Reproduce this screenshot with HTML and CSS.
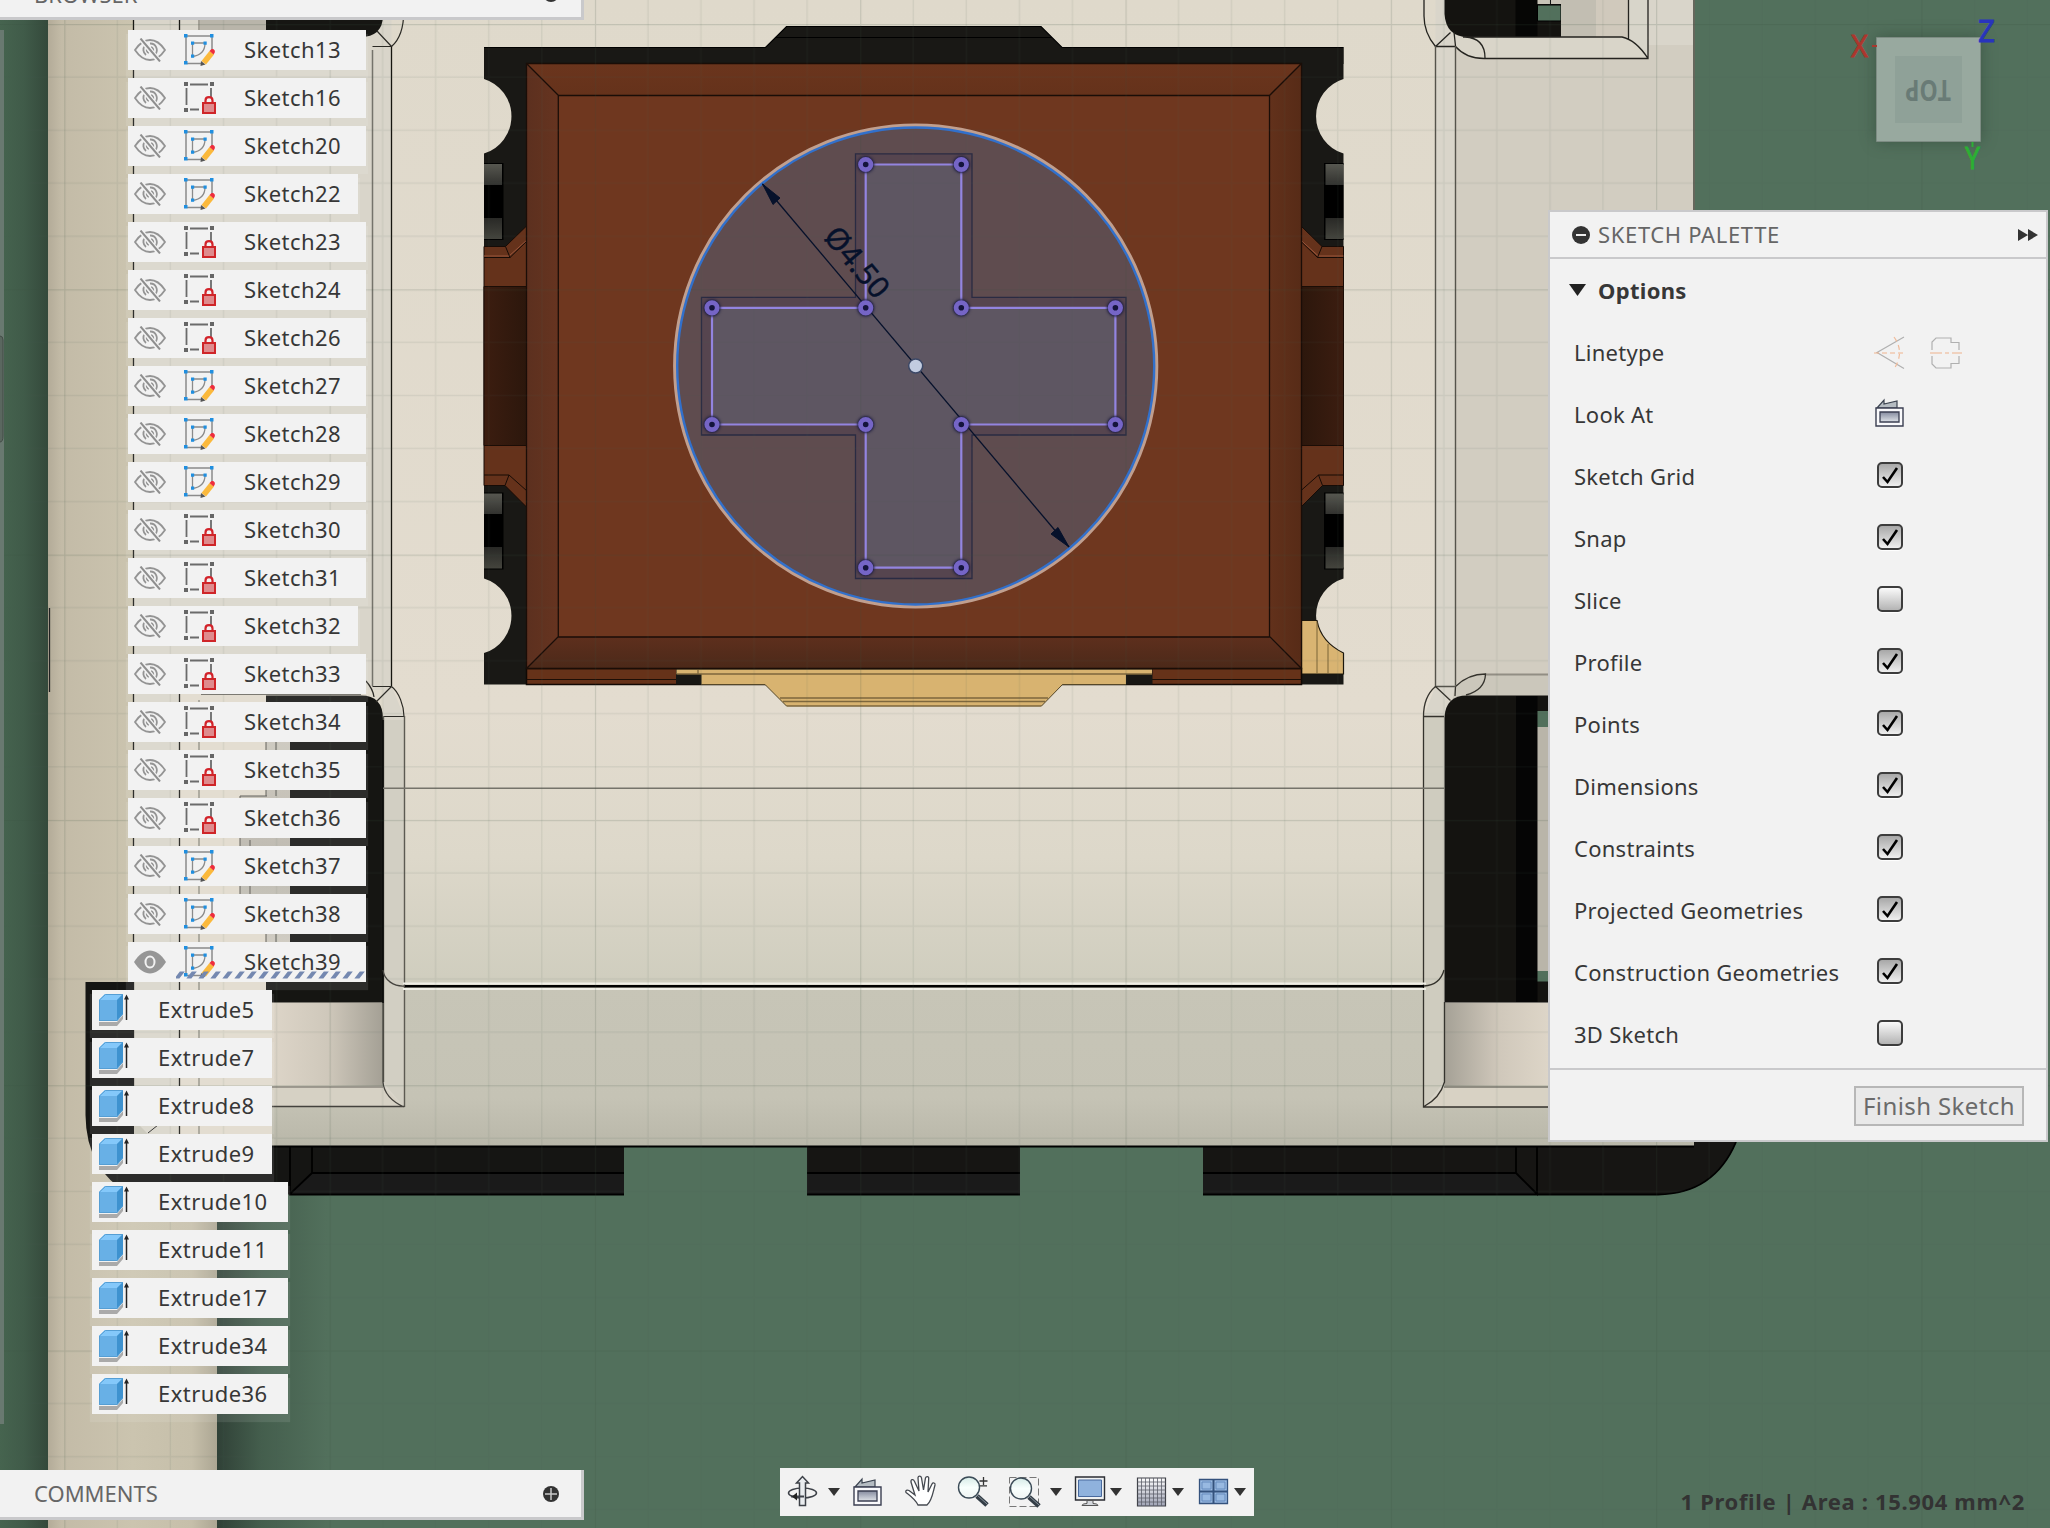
FILE: index.html
```html
<!DOCTYPE html>
<html lang="en">
<head>
<meta charset="utf-8">
<title>Sketch editor</title>
<link rel="stylesheet" href="styles.css">
</head>
<body>
<svg class="defs" width="0" height="0">
  <symbol id="hidden" viewBox="0 0 32 24"><g fill="none" stroke="#949494" stroke-width="1.8"><path d="M1 12C6 4.500 11 2 16 2s10 2.500 15 10c-5 7.500-10 10-15 10S6 19.500 1 12z"/><path d="M12 17a6.500 6.500 0 0 1-1-9.500M16 5.500a6.500 6.500 0 0 1 5 11M17 9a3.300 3.300 0 0 1 2 4.500M13 10.500a3.300 3.300 0 0 0 2 4.500"/></g><path d="M6 0l20 24" stroke="#f2f2f2" stroke-width="5"/><path d="M6.500 .500L26 23.500" stroke="#8e8e8e" stroke-width="2"/></symbol>
  <symbol id="shown" viewBox="0 0 32 24"><path d="M0 12C5 4 11 .500 16 .500S27 4 32 12c-5 8-11 11.500-16 11.500S5 20 0 12z" fill="#969696"/><ellipse cx="16" cy="12" rx="4.500" ry="5.500" fill="none" stroke="#f2f2f2" stroke-width="2"/></symbol>
  <symbol id="sketch" viewBox="0 0 32 32"><path d="M3 2h24M2 3v25M28 3v15M3 29.500h14" fill="none" stroke="#8b8b8b" stroke-width="1.500"/><path d="M8.500 9H21c0 8-5 12.500-12.500 13.500z" fill="none" stroke="#8b8b8b" stroke-width="1.300"/><path d="M0 0h3.500v3.500H0zM26 0h3.500v3.500H26zM0 27h3.500v3.500H0zM7 7.500h3.200v3.200H7zM19.500 7.500h3.200v3.200h-3.200zM7 20.500h3.200v3.200H7z" fill="#208fe0"/><path d="M17.500 27l8-10 4.500 3.500-8 10z" fill="#fbb93c"/><path d="M25.500 17l1.500-1.500c2-1.500 5 1 3.500 3.500l-1 1.500z" fill="#ee2d3c"/><path d="M17 27l4.500 3.500-5 1.500z" fill="#555"/></symbol>
  <symbol id="locked" viewBox="0 0 32 32"><path d="M6 2.500h18M2.500 6v17M27 6v9M6 27.500h9" stroke="#6b6b6b" stroke-width="1.800"/><path d="M0 0h4v4H0zM26 0h4v4h-4zM0 26h4v4H0z" fill="#666"/><path d="M21.500 20v-1.500c0-4.500 7-4.500 7 0V20" fill="none" stroke="#d2232a" stroke-width="2.200"/><path d="M19 21h12v10H19z" fill="#df8b8d" stroke="#cf2528" stroke-width="2"/></symbol>
  <symbol id="extrude" viewBox="0 0 32 32"><path d="M0 28h18l6-7v4l-6 7H0z" fill="#aaa"/><path d="M0 27V6l6-6h18v20l-6 7z" fill="#68b0e6"/><path d="M0 6l6-6h18l-6 6z" fill="#84c8fa"/><path d="M18 6l6-6v20l-6 7z" fill="#3e92cf"/><path d="M.500 26.500V6M.500 6l6-5.500H24M0 26.500h18l5.500-6.500" fill="none" stroke="#559ed4"/><path d="M27.500 4v22" stroke="#222" stroke-width="1.500"/><path d="M25 5.500L27.500.500 30 5.500z" fill="#222"/></symbol>
  <symbol id="lookat" viewBox="0 0 32 32"><path d="M3 10L10 2v4l13-3v7z" fill="#b5bcc2" stroke="#3b4350" stroke-width="1.200"/><path d="M2 10h27v18H2z" fill="#fafafc" stroke="#3b3f52" stroke-width="1.400"/><path d="M6 14h19v10H6z" fill="url(#steel)" stroke="#3b3f52" stroke-width="1.300"/></symbol>
  <symbol id="glass" viewBox="0 0 32 32"><path d="M20 20l10 9" stroke="#333d46" stroke-width="5"/><path d="M20 19l10 9" stroke="#87929b" stroke-width="1"/><circle cx="12" cy="11.500" r="10.500" fill="url(#lens)" stroke="#3b4b57" stroke-width="1.400"/></symbol>
  <linearGradient id="steel" x2="0" y2="1"><stop stop-color="#858b9f"/><stop offset="1" stop-color="#dfe3e8"/></linearGradient>
  <linearGradient id="lens" x2="0" y2="1"><stop stop-color="#d6ebe7"/><stop offset=".5" stop-color="#f8fffd"/><stop offset="1" stop-color="#eff4f3"/></linearGradient>
  <linearGradient id="meshfill" x2="0" y2="1"><stop stop-color="#fdfdfd"/><stop offset="1" stop-color="#9fa3b5"/></linearGradient>
</svg>

<svg class="scene" viewBox="0 0 2050 1528" width="2050" height="1528">
  <defs>
    <pattern id="grid" width="265.3" height="265.3" patternUnits="userSpaceOnUse" x="64.300" y="24">
      <path d="M53.100 0v265.300M106.100 0v265.300M159.200 0v265.300M212.200 0v265.300M0 53.100h265.300M0 106.100h265.300M0 159.200h265.300M0 212.200h265.300" stroke="#47594c" stroke-opacity=".09" stroke-width="1.500"/>
      <path d="M.500 0v265.300M0 .500h265.300" stroke="#354a3b" stroke-opacity=".17" stroke-width="1.300"/>
    </pattern>
    <linearGradient id="leftgreen"><stop stop-color="#46644f"/><stop offset=".5" stop-color="#405b49"/><stop offset="1" stop-color="#34493b"/></linearGradient>
    <linearGradient id="post"><stop stop-color="#b3ab98"/><stop offset=".08" stop-color="#c3bba7"/><stop offset=".5" stop-color="#cbc4af"/><stop offset=".85" stop-color="#c6bfaa"/><stop offset="1" stop-color="#aca693"/></linearGradient>
    <linearGradient id="shade"><stop stop-color="#304137"/><stop offset=".4" stop-color="#445e4d"/><stop offset="1" stop-color="#52705c"/></linearGradient>
    <linearGradient id="face" x2="0" y2="1"><stop stop-color="#dfd9cb"/><stop offset=".72" stop-color="#e3dccf"/><stop offset=".87" stop-color="#ddd8ca"/><stop offset="1" stop-color="#cfcdbe"/></linearGradient>
    <linearGradient id="ledge" x2="0" y2="1"><stop stop-color="#c7c5b7"/><stop offset=".7" stop-color="#c5c3b5"/><stop offset="1" stop-color="#b9b7a9"/></linearGradient>
    <linearGradient id="pocketL"><stop stop-color="#ddd5c8"/><stop offset=".5" stop-color="#cfc8bb"/><stop offset="1" stop-color="#a4a095"/></linearGradient>
    <linearGradient id="pocketR"><stop stop-color="#a5a196"/><stop offset=".5" stop-color="#d0c8bb"/><stop offset="1" stop-color="#dfd7c9"/></linearGradient>
    <linearGradient id="bevB" x2="0" y2="1"><stop stop-color="#5e2f1d"/><stop offset="1" stop-color="#4b2919"/></linearGradient>
    <linearGradient id="bevT" x2="0" y2="1"><stop stop-color="#6b351d"/><stop offset="1" stop-color="#65321b"/></linearGradient>
    <linearGradient id="bevR"><stop stop-color="#62311b"/><stop offset="1" stop-color="#572b17"/></linearGradient>
    <linearGradient id="bevL"><stop stop-color="#5c301f"/><stop offset="1" stop-color="#663420"/></linearGradient>
    <linearGradient id="well"><stop stop-color="#3c1d10"/><stop offset="1" stop-color="#2c170c"/></linearGradient>
    <linearGradient id="slot" x2="0" y2="1"><stop stop-color="#575750"/><stop offset=".28" stop-color="#31312e"/><stop offset=".28" stop-color="#000"/><stop offset=".72" stop-color="#000"/><stop offset=".72" stop-color="#292926"/><stop offset="1" stop-color="#44443d"/></linearGradient>
    <linearGradient id="recess" x2="0" y2="1"><stop stop-color="#c9c5ba"/><stop offset=".6" stop-color="#b7b3a9"/><stop offset="1" stop-color="#cbc7bc"/></linearGradient>
    <g id="side">
      <path d="M484 47.500H527V684.500H484V653A39 39 0 0 0 484 578.500V153.500A39 39 0 0 0 484 79z" fill="#191815"/>
      <path d="M484 164h18.500v75H484M484 493.500h18.500v75H484" fill="none" stroke="#000" stroke-width="2"/>
      <path d="M484 164h18v75H484z" fill="url(#slot)"/><path d="M484 493.500h18v75H484z" fill="url(#slot)"/>
      <path d="M484 246.500h21.500L526.500 226v281l-21.500-21.500H484z" fill="#65321b" stroke="#160b06"/>
      <path d="M484 256h25l18-16" fill="none" stroke="#9b563c"/><path d="M484 257.500h26l17-16.500M505.500 246.500l4.500 11M484 475h25l18 16M509 475l-4 10.500" fill="none" stroke="#170b05"/>
      <path d="M484 286.500h42.500v159H484z" fill="url(#well)" stroke="#1b0d06"/>
    </g>
  </defs>
  <rect width="2050" height="1528" fill="#52705c"/>
  <rect width="48" height="1528" fill="url(#leftgreen)"/>
  <rect x="48" width="169" height="1528" fill="url(#post)"/>
  <rect x="217" y="1180" width="110" height="348" fill="url(#shade)"/>
  <path d="M49.500 608v84" stroke="#222" stroke-width="1.300"/>

  <path d="M134 0H1694V1146H272L160 1148L134 1120z" fill="#d9d5ca"/>
  <path d="M179 690h204v456H179z" fill="#e0dacc"/>
  <path d="M133.500 0v1120M179.500 0v30M179.500 694v440" stroke="#171713" stroke-width="1.300"/>
  <path d="M199 0v30M199 700v440" stroke="#9f9c91" stroke-width="1.800"/>
  <path d="M200 20h66v14h-66z" fill="#b9b5aa"/>
  <path d="M1455 45h239v640h-239z" fill="#d2cdc1"/>
  <path d="M391.500 0H1435.500V686L1424 716V986H404V716L391.500 686z" fill="url(#face)"/>
  <path d="M404 986h1020v121h270v39H272v-39h132z" fill="url(#ledge)"/>
  <path d="M383 720h21v387l-21-25z" fill="#d2cfc3"/><path d="M1424 716h20v366l-20 25z" fill="#cfccbf"/>

  <path d="M266 0H383V15Q383 37 360 37H266z" fill="#161613"/>
  <path d="M266 695.500H361Q383 695.500 383 719V1002.500H266z" fill="#151512"/>
  <path d="M240 742h50v200h-50z" fill="url(#recess)"/><path d="M240 742h26v54h-26zM240 900h26v102h-26z" fill="#e0dacc"/>
  <path d="M266 742v54M276 742v54M276 900v42M266 900v42M240 796h27M240 796v100h36M250 840v56" fill="none" stroke="#55534c"/>
  <path d="M201 694h160" stroke="#6c6a62" stroke-width="2"/>
  <path d="M372.500 50v636" stroke="#75736b" stroke-width="1.500"/><path d="M391.500 46v640" stroke="#16150f" stroke-width="1.300"/>
  <path d="M403.700 10C404 28 399 40 391.500 46.500L372.500 46.500M391.500 46.500L377 31M391.500 686.500H372.500M391.500 686.500L376 702M391.500 686.500C399 692 404 706 404 716.500H383M366 681q7 8 8 16" fill="none" stroke="#2b2a25" stroke-width="1.200"/>
  <path d="M404.500 716v391M383.500 716v366" stroke="#5c5a52" stroke-width="1.400"/>
  <path d="M383 1003V720" stroke="#000" stroke-width="1.500"/>
  <path d="M272 1003h111v84H272z" fill="url(#pocketL)"/><path d="M272 1087h112l20 20H272z" fill="#d6d1c4"/>
  <path d="M272 1087H383" stroke="#a09b91" stroke-width="2"/><path d="M272 1106.500H404.500M383 1003v79C384 1094 393 1102 404 1107M383 970C384 980 394 987 405 986" fill="none" stroke="#44423d" stroke-width="1.300"/>

  <path d="M1444.500 0V14Q1446 37 1468 37H1561V0z" fill="#141310"/><path d="M1515.500 0h22v37h-22z" fill="#060605"/>
  <path d="M1537.500 5h23.500v16h-23.500z" fill="#52705c" stroke="#000"/><path d="M1537.500 0h23.500v4h-23.500z" fill="#c8c3b7"/><path d="M1550.500 0v4" stroke="#111"/>
  <path d="M1561 0h68v37h-68z" fill="#c2beb2"/><path d="M1596 0h33v37h-33z" fill="#d0c9bc"/>
  <path d="M1463 37H1623Q1636 40 1648 58.500H1484Q1466 58 1455.500 46z" fill="#d9d5c9"/><path d="M1629 0h19v58l-19-20z" fill="#d8d5ca"/>
  <path d="M1424 0v16C1424 30 1430 40 1435.500 46.500H1455.500C1463 55 1472 58.500 1484 58.500H1648V0M1628.500 0V39M1463 37H1622Q1636 40 1648 58.500M1435.500 46.500l15-14M1465 37Q1485 38 1485 58M1455.500 46L1454 32" fill="none" stroke="#24231f" stroke-width="1.300"/>
  <path d="M1435.500 46V686.500H1455.500V46" fill="none" stroke="#55534b" stroke-width="1.400"/>
  <path d="M1694 0V215" stroke="#65675c" stroke-width="2"/>

  <path d="M1455 686Q1468 674 1485 674H1560V696H1465L1452 702z" fill="#cbc7bb"/>
  <path d="M1444.500 1002.500V717Q1446 695.500 1467 695.500H1560V1002.500z" fill="#141310"/><path d="M1516 696h21.500v306H1516z" fill="#050505"/>
  <path d="M1537.500 711h24v16h-24zM1537.500 971h24v10.500h-24z" fill="#52705c"/><path d="M1537.500 727h24v244h-24z" fill="#b9b5a9"/>
  <path d="M1444.500 1003h110v84h-110z" fill="url(#pocketR)"/><path d="M1444 1087h110v20h-130z" fill="#d8d2c4"/>
  <path d="M1444 1087h110M1485 674.500h70" fill="none" stroke="#928e84" stroke-width="2"/>
  <path d="M1435.500 686.500C1429 692 1423.500 702 1423.500 716.500H1444M1435.500 686.500l15 14M1455.500 686.500Q1468 674 1485.500 674Q1485 690 1466 695M1455.500 686.500L1455 696M1423.500 716V1107H1554M1444 970Q1440 985 1424 986M1444.500 1002V1082Q1440 1098 1424 1106.500" fill="none" stroke="#34322c" stroke-width="1.300"/>
  <path d="M383 788.300H1444.500" stroke="#75736a" stroke-width="1.400"/>
  <path d="M403 983.500H1426M403 989H1426" stroke="#efeee6" stroke-width="2"/><path d="M405 986.200H1424" stroke="#000" stroke-width="2.600"/>

  <path d="M85.500 982H134V1125L160 1146H624V1194.500H130Q86 1170 85.500 1115z" fill="#151513"/>
  <path d="M134 1120L150 1136H272v10H134z" fill="#c7c4b7"/><path d="M148 1133l10-8" stroke="#222"/>
  <path d="M807 1146.500h213v48H807zM1203 1146.500H1694V1142H1736Q1714 1194.500 1658 1194.500H1203z" fill="#161513"/>
  <path d="M312 1173h312v21H290zM807 1173h213v21H807zM1203 1173h313l21 21h-334z" fill="#1a1a1a"/>
  <path d="M272 1146.500H1694M290 1146v48l22-21h312M312 1146v27M807 1173h213M1203 1173h313V1146M1516 1173l21 21v-48M290 1194.500h334M807 1194.500h213M1203 1194.500h455Q1714 1194 1736 1142" fill="none" stroke="#000" stroke-width="1.800"/>

  <use href="#side"/><use href="#side" transform="translate(1827.500 0) scale(-1 1)"/>
  <path d="M484 47.500H765.500L786.500 26.500H1041L1062 47.500H1343.500V64H484z" fill="#191815"/>
  <path d="M484 47.500H765.500L786.500 26.500H1041L1062 47.500H1343.500M776 37.500H1052" fill="none" stroke="#000" stroke-width="1.200"/>
  <path d="M1301.500 620.500H1317Q1321 642 1343.500 653V674H1301.500z" fill="#d9b472" stroke="#1b160c" stroke-width="1.200"/><path d="M1317 622v52M1328 644v30" stroke="#7b6437"/>
  <path d="M526.500 668.500H1301.500V684.500H526.500z" fill="#663219" stroke="#100804" stroke-width="1.500"/><path d="M526.500 679.500H1301.500" stroke="#1d0e06"/>
  <path d="M676 669H1152.500V684.500H676z" fill="#171613"/>
  <path d="M676.500 669.500H1152V674H1126V684.500H1062.500L1041.500 706H786.500L765 684.500H701.500V674H676.500z" fill="#d8b370"/>
  <path d="M676.500 674H1152M698 669v5M780 698H1048M783 701.500H1045M786.500 706H1041.500" stroke="#7d673d" stroke-width="1.300"/>
  <path d="M701.500 684.500H765L786.500 706M1041.500 706L1062.500 684.500H1126" fill="none" stroke="#554728"/>

  <path d="M526.500 63.500H1301.500L1269.500 95.500H558.300z" fill="url(#bevT)"/><path d="M526.500 63.500L558.300 95.500V637L526.500 668.500z" fill="url(#bevL)"/>
  <path d="M1301.500 63.500L1269.500 95.500V637L1301.500 668.500z" fill="url(#bevR)"/><path d="M558.300 637H1269.500L1301.500 668.500H526.500z" fill="url(#bevB)"/>
  <path d="M558.300 95.500H1269.500V637H558.300z" fill="#6f371f"/>
  <path d="M526.500 63.500H1301.500V668.500H526.500zM558.300 95.500H1269.500V637H558.300zM526.500 63.500l32 32M1301.500 63.500l-32 32M526.500 668.500l32-32M1301.500 668.500l-32-32" fill="none" stroke="#1a0d07" stroke-width="1.300"/>

  <circle cx="915.700" cy="366" r="239" fill="#5f4c4f"/>
  <path d="M855.500 153.800H972V297.300H1126V435H972V578.500H855.500V435H701.500V297.300H855.500z" fill="#56454f" stroke="#2a2b43" stroke-width="1.300"/>
  <path d="M865.700 164.500H961.300V307.800H1115.400V424.500H961.300V567.700H865.700V424.500H712V307.800H865.700z" fill="#5e5662"/>
  <rect width="2050" height="1528" fill="url(#grid)"/>
  <circle cx="915.700" cy="366" r="240.600" fill="none" stroke="#c09f8f" stroke-width="4"/><circle cx="915.700" cy="366" r="238.500" fill="none" stroke="#3170cc" stroke-width="2.400"/>
  <path d="M762.500 184L1069 547" stroke="#06112b" stroke-width="1.300"/><path d="M762.500 184L780 198 773 204.500zM1069 547L1051 534 1058 527.500z" fill="#06112b" stroke="#06112b"/>
  <path d="M865.700 164.500H961.300V307.800H1115.400V424.500H961.300V567.700H865.700V424.500H712V307.800H865.700z" fill="none" stroke="#9384e0" stroke-width="2.200"/>
  <text class="dimension" transform="translate(826 234) rotate(49.900)" x="0" y="5" textLength="83" lengthAdjust="spacingAndGlyphs">Ø4.50</text>
  <g fill="#14143c" stroke="#7565c6" stroke-width="4.800">
    <g class="halo"><circle cx="865.700" cy="164.500" r="5.200"/><circle cx="961.300" cy="164.500" r="5.200"/><circle cx="712" cy="307.800" r="5.200"/><circle cx="865.700" cy="307.800" r="5.200"/><circle cx="961.300" cy="307.800" r="5.200"/><circle cx="1115.400" cy="307.800" r="5.200"/><circle cx="712" cy="424.500" r="5.200"/><circle cx="865.700" cy="424.500" r="5.200"/><circle cx="961.300" cy="424.500" r="5.200"/><circle cx="1115.400" cy="424.500" r="5.200"/><circle cx="865.700" cy="567.700" r="5.200"/><circle cx="961.300" cy="567.700" r="5.200"/></g>
  </g>
  <circle cx="915.700" cy="366" r="7" fill="#c2cce0" stroke="#3c4866" stroke-width="1.500"/>

  <g class="cube">
    <path class="cube-face" d="M1876.500 37.500h104v104h-104z" fill="#98a99f" stroke="#7d8c83"/><path d="M1895 56h67v67h-67z" fill="#8fa198"/>
    <text class="cube-label" transform="translate(1951 79.500) rotate(180)" textLength="46" lengthAdjust="spacingAndGlyphs">TOP</text>
    <path d="M1872 46h5" stroke="#a8392f" stroke-width="2"/><path d="M1972.500 142v5" stroke="#2daf35" stroke-width="2"/>
    <text class="axis" x="1851" y="57" fill="#ad362d" stroke="#ad362d" textLength="17" lengthAdjust="spacingAndGlyphs">X</text><text class="axis" x="1978" y="42" fill="#2834bd" stroke="#2834bd" textLength="17" lengthAdjust="spacingAndGlyphs">Z</text><text class="axis" x="1965" y="169" fill="#2bb033" stroke="#2bb033" textLength="15" lengthAdjust="spacingAndGlyphs">Y</text>
  </g>
  <path d="M0 30h4v1394H0z" fill="#697970"/><path d="M0 336q3 0 3 4v96q0 6-3 6" fill="#5a675f" stroke="#434d47"/>
</svg>

<ul class="tree">
  <li class="row"><svg class="eye"><use href="#hidden"/></svg><svg class="kind"><use href="#sketch"/></svg><span>Sketch13</span></li>
  <li class="row"><svg class="eye"><use href="#hidden"/></svg><svg class="kind"><use href="#locked"/></svg><span>Sketch16</span></li>
  <li class="row"><svg class="eye"><use href="#hidden"/></svg><svg class="kind"><use href="#sketch"/></svg><span>Sketch20</span></li>
  <li class="row row-short"><svg class="eye"><use href="#hidden"/></svg><svg class="kind"><use href="#sketch"/></svg><span>Sketch22</span></li>
  <li class="row"><svg class="eye"><use href="#hidden"/></svg><svg class="kind"><use href="#locked"/></svg><span>Sketch23</span></li>
  <li class="row"><svg class="eye"><use href="#hidden"/></svg><svg class="kind"><use href="#locked"/></svg><span>Sketch24</span></li>
  <li class="row"><svg class="eye"><use href="#hidden"/></svg><svg class="kind"><use href="#locked"/></svg><span>Sketch26</span></li>
  <li class="row"><svg class="eye"><use href="#hidden"/></svg><svg class="kind"><use href="#sketch"/></svg><span>Sketch27</span></li>
  <li class="row"><svg class="eye"><use href="#hidden"/></svg><svg class="kind"><use href="#sketch"/></svg><span>Sketch28</span></li>
  <li class="row"><svg class="eye"><use href="#hidden"/></svg><svg class="kind"><use href="#sketch"/></svg><span>Sketch29</span></li>
  <li class="row"><svg class="eye"><use href="#hidden"/></svg><svg class="kind"><use href="#locked"/></svg><span>Sketch30</span></li>
  <li class="row"><svg class="eye"><use href="#hidden"/></svg><svg class="kind"><use href="#locked"/></svg><span>Sketch31</span></li>
  <li class="row row-short"><svg class="eye"><use href="#hidden"/></svg><svg class="kind"><use href="#locked"/></svg><span>Sketch32</span></li>
  <li class="row"><svg class="eye"><use href="#hidden"/></svg><svg class="kind"><use href="#locked"/></svg><span>Sketch33</span></li>
  <li class="row"><svg class="eye"><use href="#hidden"/></svg><svg class="kind"><use href="#locked"/></svg><span>Sketch34</span></li>
  <li class="row"><svg class="eye"><use href="#hidden"/></svg><svg class="kind"><use href="#locked"/></svg><span>Sketch35</span></li>
  <li class="row"><svg class="eye"><use href="#hidden"/></svg><svg class="kind"><use href="#locked"/></svg><span>Sketch36</span></li>
  <li class="row"><svg class="eye"><use href="#hidden"/></svg><svg class="kind"><use href="#sketch"/></svg><span>Sketch37</span></li>
  <li class="row"><svg class="eye"><use href="#hidden"/></svg><svg class="kind"><use href="#sketch"/></svg><span>Sketch38</span></li>
  <li class="row row-active"><svg class="eye"><use href="#shown"/></svg><svg class="kind"><use href="#sketch"/></svg><span>Sketch39</span><svg class="hatch" viewBox="0 0 190 10"><path d="M3 5H190" stroke="#7488b0" stroke-width="7" stroke-dasharray="5 7" transform="skewX(-38) translate(2 0)"/></svg></li>
  <li class="row feature feature-short"><svg class="kind"><use href="#extrude"/></svg><span>Extrude5</span></li>
  <li class="row feature feature-short"><svg class="kind"><use href="#extrude"/></svg><span>Extrude7</span></li>
  <li class="row feature feature-short"><svg class="kind"><use href="#extrude"/></svg><span>Extrude8</span></li>
  <li class="row feature feature-short"><svg class="kind"><use href="#extrude"/></svg><span>Extrude9</span></li>
  <li class="row feature"><svg class="kind"><use href="#extrude"/></svg><span>Extrude10</span></li>
  <li class="row feature"><svg class="kind"><use href="#extrude"/></svg><span>Extrude11</span></li>
  <li class="row feature"><svg class="kind"><use href="#extrude"/></svg><span>Extrude17</span></li>
  <li class="row feature"><svg class="kind"><use href="#extrude"/></svg><span>Extrude34</span></li>
  <li class="row feature"><svg class="kind"><use href="#extrude"/></svg><span>Extrude36</span></li>
</ul>

<header class="dock dock-top"><span class="dock-title">BROWSER</span><svg class="knob" viewBox="0 0 16 16"><circle cx="8" cy="8" r="8" fill="#333"/></svg></header>
<footer class="dock dock-bottom"><span class="dock-title">COMMENTS</span><svg class="knob" viewBox="0 0 16 16"><circle cx="8" cy="8" r="8" fill="#333"/><path d="M8 2v12M2 8h12" stroke="#c9c9c9" stroke-width="1.500"/></svg></footer>

<section class="palette">
  <div class="palette-head"><svg class="knob" viewBox="0 0 18 18"><circle cx="9" cy="9" r="9" fill="#333"/><path d="M4 9h10" stroke="#eee" stroke-width="2"/></svg><span>SKETCH PALETTE</span><svg class="forward" viewBox="0 0 20 12"><path d="M0 0l10 6-10 6zM10 0l10 6-10 6z" fill="#333"/></svg></div>
  <div class="palette-body">
    <div class="group"><svg class="caret" viewBox="0 0 17 12"><path d="M0 0h17l-8.500 12z" fill="#222"/></svg><b>Options</b></div>
    <div class="option"><span>Linetype</span><div class="pair">
      <svg width="34" height="34" viewBox="0 0 34 34" fill="none"><path d="M31 1L4 16.500 31 32.500" stroke="#b0b0b0" stroke-width="1.200"/><path d="M1 17h32" stroke="#efb48e" stroke-dasharray="5 3" stroke-width="1.200"/><path d="M21 1q11 15 0 32" stroke="#f0bb9a" stroke-dasharray="5 4" stroke-width="1.200"/></svg>
      <svg width="34" height="34" viewBox="0 0 34 34" fill="none"><path d="M3 14V6l4-4h15v4.500h8V14M3 20v8l4 4h15v-4.500h8V20" stroke="#b0b0b0" stroke-width="1.200"/><path d="M1 17h32" stroke="#edb18c" stroke-dasharray="12 3 4 3" stroke-width="1.200"/></svg></div></div>
    <div class="option"><span>Look At</span><svg class="look"><use href="#lookat"/></svg></div>
    <div class="option"><span>Sketch Grid</span><i class="box on"><svg viewBox="0 0 22 22"><path d="M4 13l4.500 5L18 4"/></svg></i></div>
    <div class="option"><span>Snap</span><i class="box on"><svg viewBox="0 0 22 22"><path d="M4 13l4.500 5L18 4"/></svg></i></div>
    <div class="option"><span>Slice</span><i class="box"></i></div>
    <div class="option"><span>Profile</span><i class="box on"><svg viewBox="0 0 22 22"><path d="M4 13l4.500 5L18 4"/></svg></i></div>
    <div class="option"><span>Points</span><i class="box on"><svg viewBox="0 0 22 22"><path d="M4 13l4.500 5L18 4"/></svg></i></div>
    <div class="option"><span>Dimensions</span><i class="box on"><svg viewBox="0 0 22 22"><path d="M4 13l4.500 5L18 4"/></svg></i></div>
    <div class="option"><span>Constraints</span><i class="box on"><svg viewBox="0 0 22 22"><path d="M4 13l4.500 5L18 4"/></svg></i></div>
    <div class="option"><span>Projected Geometries</span><i class="box on"><svg viewBox="0 0 22 22"><path d="M4 13l4.500 5L18 4"/></svg></i></div>
    <div class="option"><span>Construction Geometries</span><i class="box on"><svg viewBox="0 0 22 22"><path d="M4 13l4.500 5L18 4"/></svg></i></div>
    <div class="option"><span>3D Sketch</span><i class="box"></i></div>
  </div>
  <div class="palette-foot"><button class="finish">Finish Sketch</button></div>
</section>

<nav class="toolbar">
  <svg class="tools" viewBox="0 0 474 48" width="474" height="48">
    <g fill="none" stroke="#3d4148" stroke-width="1.500">
      <ellipse cx="22.500" cy="25" rx="14" ry="5"/><path d="M19.500 37.500V15h-3l6-6.500 6 6.500h-3v22.500z" fill="#e9ecef"/><path d="M11 28.500h13" stroke-width="2"/><path d="M17 24.500v8l-5-4z" fill="#222" stroke="none"/>
    </g>
    <g fill="#333"><path d="M48 20h12l-6 8zM270 20h12l-6 8zM330 20h12l-6 8zM392 20h12l-6 8zM454 20h12l-6 8z"/></g>
    <use href="#lookat" x="72" y="9" width="32" height="32"/>
    <path d="M138 37C135 31 129 27 126 24.500c-1-2 1-3 3-2l6 4.500-4-13c-.5-3 2.500-3 3.300-1l4.700 10-1-13c0-2.500 3-2.500 3.500 0l2 12 2-12c.5-2 3.500-2 3.200.5L148 24l4-8c1-2 3.500-1 3 1-2 7-3 16-8 20z" fill="#fff" stroke="#454950" stroke-width="1.300"/>
    <use href="#glass" x="177" y="8" width="32" height="32"/><path d="M203.500 9v8M199.500 13h8M200 17.800h7" stroke="#333" stroke-width="1.300"/>
    <path d="M229.500 9.500h29v29h-29z" fill="none" stroke="#777" stroke-dasharray="7 3"/><use href="#glass" x="229" y="9" width="32" height="32"/>
    <path d="M295.500 9h29v23h-29z" fill="#eff1f2" stroke="#2b2d33" stroke-width="1.400"/><path d="M298.500 12h23v16.500h-23z" fill="#8fb2dd" stroke="#48699e"/><path d="M307 32.500h6v3q5 0 5 2h-16q0-2 5-2z" fill="#d5d8dd" stroke="#555"/>
    <path d="M357.500 10h28v28h-28z" fill="url(#meshfill)" stroke="#3f4148" stroke-width="1.200"/><path d="M361.500 10v28M365.500 10v28M369.500 10v28M373.500 10v28M377.500 10v28M381.500 10v28M357.500 14h28M357.500 18h28M357.500 22h28M357.500 26h28M357.500 30h28M357.500 34h28" stroke="#5d606b" stroke-width=".8"/>
    <g fill="#98b9e1" stroke="#34527d" stroke-width="1.300"><path d="M419.500 11.500h28v24h-28z"/><path d="M433.500 11.500v24M419.500 23.500h28" stroke-width="2"/></g><path d="M422 14h9v7h-9zM436 14h9v7h-9zM422 26h9v7h-9zM436 26h9v7h-9z" fill="none" stroke="#668bbd"/>
  </svg>
</nav>
<div class="status">1 Profile | Area : 15.904 mm^2</div>
</body>
</html>
```
FILE: styles.css
```css
* { box-sizing: border-box; }
body {
  margin: 0;
  width: 2050px;
  height: 1528px;
  position: relative;
  overflow: hidden;
  background: #52705c;
  color: #373737;
  font: 22px/1 "Noto Sans", "Open Sans", sans-serif;
}
svg { display: block; flex: none; }
.defs { position: absolute; }
.scene { position: absolute; inset: 0; }
.halo { filter: drop-shadow(0 0 1.5px #1d1d40) drop-shadow(0 0 .8px #1d1d40); }
.dimension { font: 30px "Noto Sans", sans-serif; fill: #06112b; stroke: #06112b; stroke-width: .4px; }
.cube-face { filter: drop-shadow(0 0 8px rgba(30, 50, 38, .4)); }
.cube-label { font: 700 29px "Open Sans", sans-serif; fill: #697b76; }
.axis { font: 31px "Noto Sans", sans-serif; stroke-width: .8px; }

/* Browser tree */
.tree {
  position: absolute;
  top: 30px;
  left: 92px;
  margin: 0;
  padding: 0;
  list-style: none;
  display: flex;
  flex-direction: column;
  align-items: flex-start;
  gap: 8px;
}
.row {
  display: flex;
  align-items: center;
  width: 238px;
  height: 40px;
  margin-left: 36px;
  padding-left: 6px;
  background: #f2f2f2;
  box-shadow: 0 6px 1px 2px rgba(255, 255, 255, .1);
  letter-spacing: .45px;
}
.row span { padding-bottom: 2px; }
.row-short { width: 230px; }
.row-active { position: relative; }
.hatch { position: absolute; left: 48px; bottom: 2px; width: 190px; height: 10px; }
.eye { width: 32px; height: 24px; margin-right: 18px; }
.kind { width: 32px; height: 32px; margin-right: 28px; }
.feature { width: 196px; margin-left: 0; padding-left: 7px; }
.feature .kind { margin-right: 27px; }
.feature-short { width: 180px; }

/* Docked panel headers */
.dock {
  position: absolute;
  left: 0;
  width: 584px;
  height: 50px;
  display: flex;
  align-items: center;
  justify-content: space-between;
  padding: 0 22px 0 34px;
  background: #f2f2f2;
  border: solid #c9c9cb;
  border-width: 0 3px 3px 0;
  color: #666;
}
.dock-title { padding-bottom: 1px; }
.dock-top { top: -30px; }
.dock-top .dock-title { padding-bottom: 0; }
.dock-bottom { top: 1470px; }
.knob { width: 16px; height: 16px; }

/* Sketch palette */
.palette {
  position: absolute;
  top: 210px;
  left: 1548px;
  width: 500px;
  height: 932px;
  display: flex;
  flex-direction: column;
  background: #f2f2f2;
  border: 2px solid #c9c9cb;
}
.palette-head {
  display: flex;
  align-items: center;
  gap: 8px;
  height: 47px;
  padding: 0 8px 0 22px;
  border-bottom: 2px solid #c9c9cb;
  color: #666;
}
.palette-head span { padding-bottom: 2px; letter-spacing: .65px; }
.palette-head .knob { width: 18px; height: 18px; }
.forward { width: 20px; height: 12px; margin-left: auto; }
.palette-body { flex: 1; }
.group { display: flex; align-items: center; gap: 12px; height: 62px; padding-left: 19px; letter-spacing: .3px; }
.caret { width: 17px; height: 12px; }
.option {
  display: grid;
  grid-template-columns: 303px 1fr;
  align-items: center;
  height: 62px;
  padding-left: 24px;
  letter-spacing: .27px;
}
.pair { display: flex; gap: 22px; margin: 2px 0 0 -4px; }
.look { width: 32px; height: 32px; margin-left: -3px; }
.box {
  width: 26px;
  height: 26px;
  margin-bottom: 2px;
  border: 2px solid #3d3d3d;
  border-radius: 5px;
  background: linear-gradient(#fafafa, #b4b4b4);
  box-shadow: 0 1px 1px #fff;
}
.on { background: linear-gradient(#a8a8a8, #efefef); }
.box path { fill: none; stroke: #000; stroke-width: 2.6; }
.palette-foot {
  height: 72px;
  display: flex;
  align-items: center;
  justify-content: flex-end;
  padding: 1px 22px 0 0;
  border-top: 2px solid #c9c9cb;
}
.finish {
  width: 170px;
  height: 40px;
  padding: 0;
  border: 2px solid #b7b7b7;
  background: #e9e9e9;
  color: #6b6b6b;
  font: 24px/1 "Noto Sans", sans-serif;
  letter-spacing: .4px;
}

.toolbar { position: absolute; left: 780px; top: 1468px; background: #f2f2f2; }
.status {
  position: absolute;
  right: 25px;
  top: 1490px;
  color: #333;
  font-weight: 700;
  letter-spacing: .65px;
  white-space: nowrap;
}
```
